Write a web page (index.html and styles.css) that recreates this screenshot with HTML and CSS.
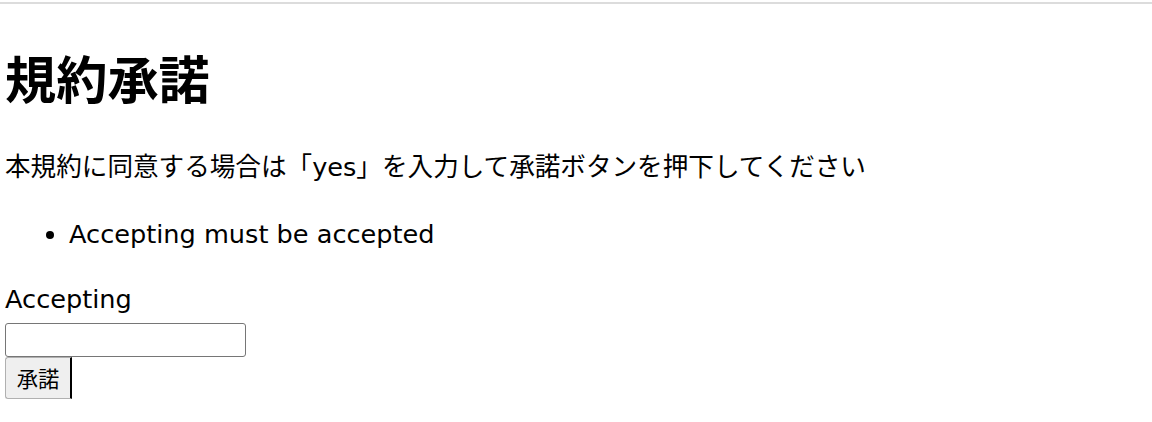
FILE: index.html
```html
<!DOCTYPE html>
<html lang="ja">
<head>
<meta charset="utf-8">
<title>規約承諾</title>
<link rel="stylesheet" href="styles.css">
</head>
<body>
<div class="topbar"></div>
<main class="page">
  <h1 class="title">規約承諾</h1>
  <p class="lead">本規約に同意する場合は「yes」を入力して承諾ボタンを押下してください</p>
  <ul class="errors">
    <li>Accepting must be accepted</li>
  </ul>
  <form class="form">
    <label class="label" for="accepting">Accepting</label>
    <input class="field" id="accepting" type="text">
    <button class="btn" type="button">承諾</button>
  </form>
</main>
</body>
</html>
```
FILE: styles.css
```css
html, body {
  margin: 0;
  padding: 0;
  background: #fff;
}
body {
  font-family: "DejaVu Sans", "Noto Sans CJK JP", sans-serif;
  color: #000;
  padding-top: 2px;
}
.topbar {
  height: 2px;
  background: #dcdcdc;
}
.page {
  padding-left: 5px;
}
.title {
  margin: 43px 0 0;
  font-size: 51.2px;
  line-height: 60px;
  font-weight: bold;
  font-family: "Noto Sans CJK JP", sans-serif;
}
.lead {
  margin: 45px 0 0;
  font-size: 25.6px;
  line-height: 30px;
}
.errors {
  margin: 37px 0 0;
  padding-left: 64px;
  font-size: 25.6px;
  line-height: 30px;
}
.form {
  margin-top: 35px;
  display: flex;
  flex-direction: column;
  align-items: flex-start;
}
.label {
  font-size: 25.6px;
  line-height: 30px;
  margin-bottom: 9px;
}
.field {
  box-sizing: border-box;
  width: 241px;
  height: 34px;
  margin: 0;
  border: 1px solid #767676;
  border-radius: 3px;
  background: #fff;
  padding: 0 4px;
}
.btn {
  box-sizing: border-box;
  width: 67px;
  height: 42px;
  margin: 0;
  padding: 0;
  font-family: "Noto Sans CJK JP", sans-serif;
  font-size: 21.3px;
  line-height: 1;
  background: #efefef;
  color: #000;
  border: 1px solid #b0b0b0;
  border-right: 2px solid #000;
  border-radius: 3px 0 0 3px;
}
```
